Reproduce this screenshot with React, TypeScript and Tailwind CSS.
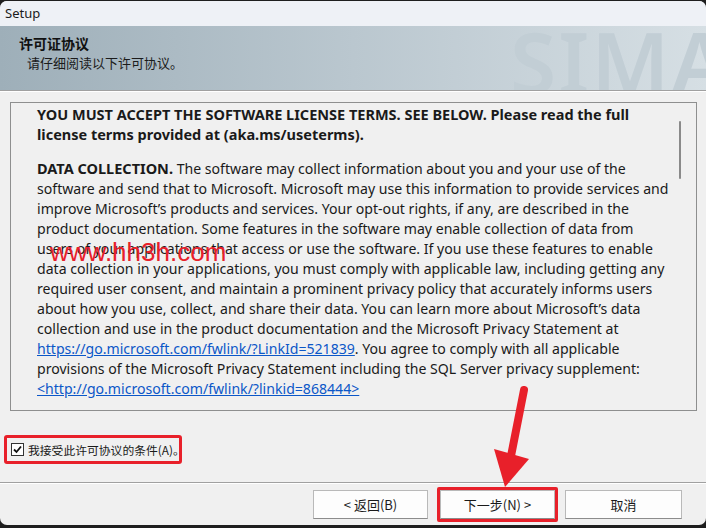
import React from 'react';

const ui = { fontFamily: '"Noto Sans", "Noto Sans CJK SC", sans-serif' };
const cjk = { fontFamily: '"Noto Sans CJK SC", "Noto Sans", sans-serif' };

const lines: string[] = [
  'software and send that to Microsoft. Microsoft may use this information to provide services and',
  'improve Microsoft’s products and services. Your opt-out rights, if any, are described in the',
  'product documentation. Some features in the software may enable collection of data from',
  'users of your applications that access or use the software. If you use these features to enable',
  'data collection in your applications, you must comply with applicable law, including getting any',
  'required user consent, and maintain a prominent privacy policy that accurately informs users',
  'about how you use, collect, and share their data. You can learn more about Microsoft’s data',
  'collection and use in the product documentation and the Microsoft Privacy Statement at',
];

const Button: React.FC<{ label: string; w: string; highlight?: boolean }> = ({ label, w, highlight }) => (
  <div className={highlight ? 'border-[3px] border-[#e8202a] rounded-[2px] -my-[3px]' : ''}>
    <div
      className={`${w} h-[29px] bg-[#fdfdfd] border border-[#b9b9b9] border-b-[#8c8c8c] flex items-center justify-center text-[13px] text-[#1a1a1a]`}
      style={cjk}
    >
      {label}
    </div>
  </div>
);

export default function App() {
  return (
    <div className="w-[706px] h-[528px] bg-[#1e1e1e] overflow-hidden pt-px">
      <div className="relative h-[524px] bg-[#f0f0f0] rounded-[7px] overflow-hidden flex flex-col">
        {/* title bar */}
        <div className="h-[25px] bg-[#eef1f6] flex items-center pl-[5px] text-[13px] text-[#1b1b1b]" style={ui}>
          Setup
        </div>

        {/* header */}
        <div className="relative h-[64px] bg-gradient-to-r from-[#9eafb9] via-[#bac7cf] to-[#d6dfe4] overflow-hidden">
          <div
            className="absolute left-[510px] top-[-6px] text-[84px] font-semibold leading-none tracking-[2px] text-[#c2ced5]"
            style={ui}
          >
            SIMA
          </div>
          <div className="relative pl-[19px] pt-[7px]" style={cjk}>
            <div className="text-[14px] font-bold text-[#111] leading-[20px]">许可证协议</div>
            <div className="pl-[8px] text-[13px] text-[#1b1b1b] leading-[20px]">请仔细阅读以下许可协议。</div>
          </div>
        </div>
        <div className="h-px bg-[#a0a0a0]" />
        <div className="h-px bg-[#ffffff]" />

        {/* license box */}
        <div className="mt-[10px] ml-[10px] mr-[9px] h-[309px] border border-[#8e8f8f] bg-[#f0f0f0] flex">
          <div className="flex-1 pl-[26px] pt-[1px] text-[14.1px] leading-[20px] text-[#1a1a1a] whitespace-nowrap" style={ui}>
            <div className="font-bold text-[14.5px]">YOU MUST ACCEPT THE SOFTWARE LICENSE TERMS. SEE BELOW. Please read the full</div>
            <div className="font-bold text-[14.5px]">license terms provided at (aka.ms/useterms).</div>
            <div className="mt-[14px]">
              <span className="font-bold text-[14.5px]">DATA COLLECTION.</span> The software may collect information about you and your use of the
            </div>
            {lines.map((l) => (
              <div key={l}>{l}</div>
            ))}
            <div>
              <span className="text-[#0b57c8] underline">https://go.microsoft.com/fwlink/?LinkId=521839</span>. You agree to comply with all applicable
            </div>
            <div>provisions of the Microsoft Privacy Statement including the SQL Server privacy supplement:</div>
            <div>
              <span className="text-[#0b57c8] underline">&lt;http://go.microsoft.com/fwlink/?linkid=868444&gt;</span>
            </div>
          </div>
          <div className="w-[17px] mr-[8px] bg-[#f0f0f0] flex justify-center pt-[18px]">
            <div className="w-[2px] h-[58px] bg-[#8a8a8a] rounded-full" />
          </div>
        </div>

        {/* accept checkbox */}
        <div className="mt-[24px] ml-[4px] w-[178px] h-[29px] border-[3px] border-[#e8202a] rounded-[3px] flex items-center gap-[4px] pl-[4px] bg-[#f0f0f0] whitespace-nowrap">
          <div className="w-[13px] h-[13px] border border-[#333] bg-white flex items-center justify-center shrink-0">
            <svg width="9" height="9" viewBox="0 0 9 9">
              <path d="M1 4.5 L3.5 7 L8 1.5" fill="none" stroke="#111" strokeWidth="1.8" />
            </svg>
          </div>
          <span className="text-[11.8px] text-[#1a1a1a]" style={cjk}>我接受此许可协议的条件(A)。</span>
        </div>

        {/* separator */}
        <div className="mt-[18px] h-px bg-[#a0a0a0]" />
        <div className="h-px bg-white" />

        {/* buttons */}
        <div className="mt-[6px] flex justify-end items-center pr-[24px]">
          <Button label="< 返回(B)" w="w-[115px]" />
          <div className="ml-[9px]">
            <Button label="下一步(N) >" w="w-[115px]" highlight />
          </div>
          <div className="ml-[7px]">
            <Button label="取消" w="w-[117px]" />
          </div>
        </div>

        {/* watermark */}
        <div
          className="absolute left-[50px] top-[232px] text-[26px] text-[#e8202a]"
          style={{ fontFamily: '"Liberation Sans", sans-serif' }}
        >
          www.hh3h.com
        </div>

        {/* arrow */}
        <svg className="absolute left-0 top-0" width="706" height="524" viewBox="0 0 706 524">
          <line x1="524" y1="389" x2="511" y2="455" stroke="#e8202a" strokeWidth="8" strokeLinecap="round" />
          <polygon points="494,448 529,458 505,486" fill="#e8202a" />
        </svg>
      </div>
    </div>
  );
}
